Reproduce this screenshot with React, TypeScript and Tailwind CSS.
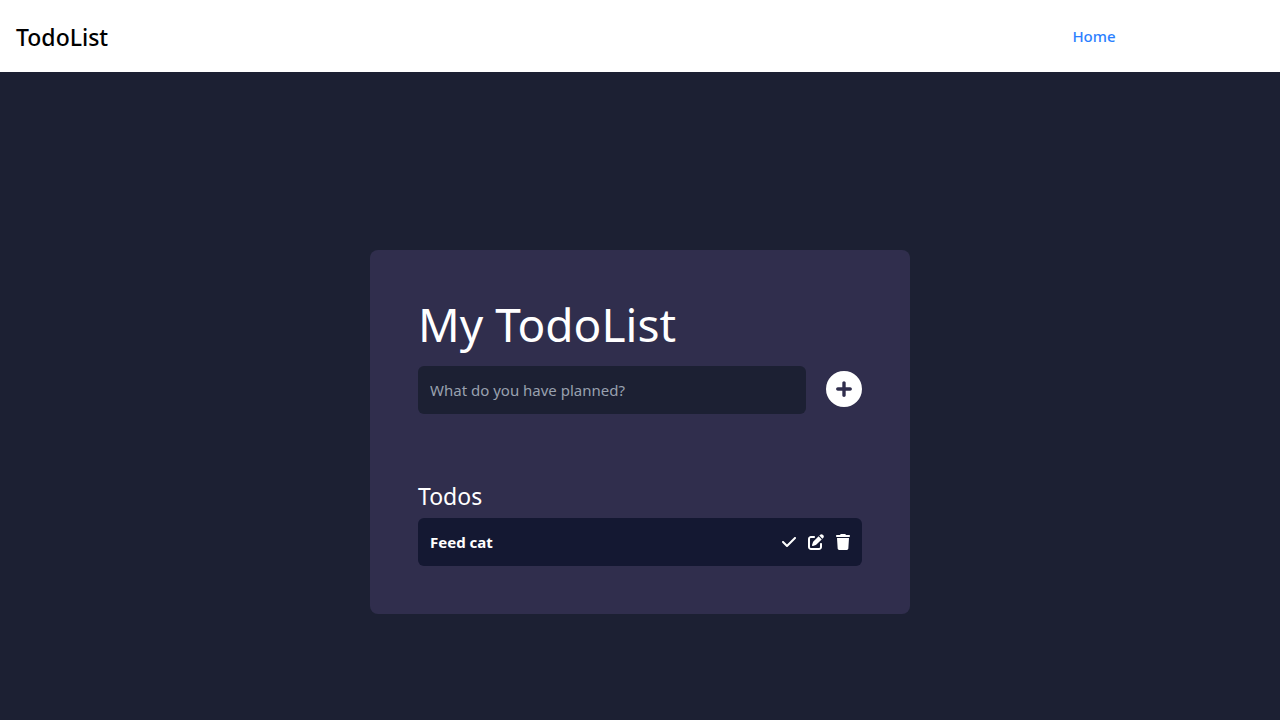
import { useState } from "react";
import { FaCheck, FaCirclePlus, FaPenToSquare, FaTrash } from "react-icons/fa6";

function Navbar() {
  return (
    <nav className="flex items-center justify-between bg-white px-4 py-4">
      <a href="#" className="pt-0.5 text-[23px] leading-[38px] font-medium text-black">
        TodoList
      </a>
      <ul className="flex w-[340px] justify-center">
        <li>
          <a href="#" className="text-[15px] leading-6 font-medium text-blue-500">
            Home
          </a>
        </li>
      </ul>
    </nav>
  );
}

type TodoRowProps = { text: string; onRemove: () => void };

function TodoRow({ text, onRemove }: TodoRowProps) {
  return (
    <li className="flex items-center justify-between rounded-md bg-[#141832] p-3 text-white">
      <span className="text-[15px] leading-6 font-bold">{text}</span>
      <div className="flex items-center gap-3">
        <button type="button" aria-label="Complete">
          <FaCheck className="h-4 w-3.5" />
        </button>
        <button type="button" aria-label="Edit">
          <FaPenToSquare className="h-4 w-4" />
        </button>
        <button type="button" aria-label="Delete" onClick={onRemove}>
          <FaTrash className="h-4 w-3.5" />
        </button>
      </div>
    </li>
  );
}

export default function App() {
  const [todos, setTodos] = useState(["Feed cat"]);
  const [draft, setDraft] = useState("");

  return (
    <div className="flex min-h-screen flex-col bg-[#1c2033] font-['Noto_Sans',sans-serif]">
      <Navbar />
      <main className="flex flex-1 items-center justify-center pt-[72px]">
        <section className="w-full max-w-[540px] rounded-lg bg-[#302e4d] p-12 text-white">
          <h1 className="pt-0.5 pb-[18px] text-[46px] leading-[48px]">My TodoList</h1>
          <form
            className="flex items-center gap-5"
            onSubmit={(e) => {
              e.preventDefault();
              if (draft.trim()) setTodos([...todos, draft.trim()]);
              setDraft("");
            }}
          >
            <input
              type="text"
              aria-label="New todo"
              value={draft}
              onChange={(e) => setDraft(e.target.value)}
              placeholder="What do you have planned?"
              className="min-w-0 flex-1 rounded-md bg-[#1c2033] p-3 text-[15px] leading-6 text-white placeholder:text-gray-400"
            />
            <button type="submit" aria-label="Add todo" className="pb-0.5">
              <FaCirclePlus className="h-9 w-9" />
            </button>
          </form>
          <h2 className="pt-[66px] pb-1.5 text-[23px] leading-8">Todos</h2>
          <ul className="flex flex-col gap-2">
            {todos.map((todo, i) => (
              <TodoRow key={i} text={todo} onRemove={() => setTodos(todos.filter((_, j) => j !== i))} />
            ))}
          </ul>
        </section>
      </main>
    </div>
  );
}
